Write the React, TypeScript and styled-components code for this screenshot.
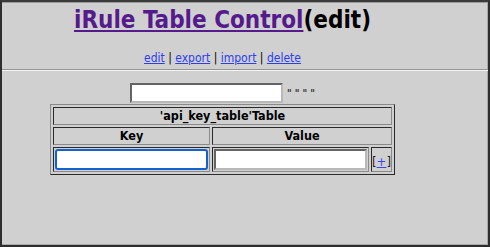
import styled, { createGlobalStyle } from "styled-components";

const GlobalStyle = createGlobalStyle`
    html, body {
        margin: 0;
        padding: 0;
    }
    body {
        font-family: "DejaVu Sans Condensed", "DejaVu Sans", sans-serif;
        background: #d0d0d0;
    }
`;

const Frame = styled.div`
    box-sizing: border-box;
    height: 247px;
    background: #d0d0d0;
    border-top: 2px solid #3a3a3a;
    border-left: 2px solid #2e2e2e;
    border-right: 2px solid #2e2e2e;
    border-bottom: 2px solid #2e2e2e;
    box-shadow: inset 0 1px 0 #9a9a9a, inset -1px 0 0 #a8a8a8, inset 0 -1px 0 #a8a8a8;
    overflow: hidden;
`;

const Header = styled.div`
    width: 441px;
    text-align: center;
    padding-top: 4px;
`;

const Title = styled.div`
    font-size: 24px;
    font-weight: bold;
    line-height: 28px;
    color: #000;
`;

const TitleLink = styled.a`
    color: #551a8b;
    text-decoration: underline;
`;

const Nav = styled.div`
    margin-top: 17px;
    font-size: 12px;
    line-height: 14px;
    color: #000;
`;

const NavLink = styled.a`
    color: #2b3ff0;
    text-decoration: underline;
`;

const Rule = styled.hr`
    margin: 4px 0 0;
    border: 0;
    height: 0;
    border-top: 1px solid #969696;
    border-bottom: 1px solid #f4f4f4;
`;

const Body = styled.div`
    width: 441px;
    display: flex;
    flex-direction: column;
    align-items: center;
    padding-top: 12px;
`;

const NameRow = styled.div`
    display: flex;
    align-items: center;
    gap: 4px;
`;

const TextInput = styled.input<{ $w: number; $h: number; $focused?: boolean }>`
    display: block;
    box-sizing: border-box;
    width: ${({ $w }) => $w}px;
    height: ${({ $h }) => $h}px;
    margin: 0;
    background: #fff;
    border: ${({ $focused }) => ($focused ? "2px solid #1462cf" : "2px inset #b8b8b8")};
    border-radius: ${({ $focused }) => ($focused ? "3px" : "0")};
    box-shadow: ${({ $focused }) => ($focused ? "inset 0 0 0 1px #fff" : "none")};
    outline: none;
    font-family: inherit;
    font-size: 12px;
`;

const Quotes = styled.span`
    font-size: 10px;
    font-weight: bold;
    color: #333;
    white-space: pre;
`;

const Table = styled.table`
    margin-top: 1px;
    border-collapse: separate;
    border-spacing: 2px;
    border-top: 1px solid #8a8a8a;
    border-left: 1px solid #8a8a8a;
    border-right: 1px solid #2a2a2a;
    border-bottom: 1px solid #2a2a2a;
`;

const Cell = styled.td<{ $head?: boolean }>`
    padding: 1px;
    border-top: 1px solid #2a2a2a;
    border-left: 1px solid #2a2a2a;
    border-right: 1px solid #8a8a8a;
    border-bottom: 1px solid #8a8a8a;
    text-align: center;
    vertical-align: middle;
    font-size: 12.5px;
    line-height: 14px;
    font-weight: ${({ $head }) => ($head ? "bold" : "normal")};
    color: #000;
`;

const AddCell = styled(Cell)`
    width: 18px;
    padding: 0;
`;

const AddButton = styled.span`
    display: inline-block;
    font-size: 13px;
    line-height: 14px;
    margin-top: 5px;
    color: #222;
`;

const Plus = styled.a`
    color: #3a46ee;
    text-decoration: underline;
`;

export default function App() {
    return (
        <>
            <GlobalStyle />
            <Frame>
                <Header>
                    <Title>
                        <TitleLink href="#">iRule Table Control</TitleLink>(edit)
                    </Title>
                    <Nav>
                        <NavLink href="#">edit</NavLink> | <NavLink href="#">export</NavLink> |{" "}
                        <NavLink href="#">import</NavLink> | <NavLink href="#">delete</NavLink>
                    </Nav>
                </Header>
                <Rule />
                <Body>
                    <NameRow>
                        <TextInput $w={153} $h={20} />
                        <Quotes>{'" " " "'}</Quotes>
                    </NameRow>
                    <Table>
                        <tbody>
                            <tr>
                                <Cell $head colSpan={3}>'api_key_table'Table</Cell>
                            </tr>
                            <tr>
                                <Cell $head>Key</Cell>
                                <Cell $head colSpan={2}>Value</Cell>
                            </tr>
                            <tr>
                                <Cell>
                                    <TextInput $w={153} $h={21} $focused />
                                </Cell>
                                <Cell>
                                    <TextInput $w={153} $h={21} />
                                </Cell>
                                <AddCell>
                                    <AddButton>
                                        [<Plus href="#">+</Plus>]
                                    </AddButton>
                                </AddCell>
                            </tr>
                        </tbody>
                    </Table>
                </Body>
            </Frame>
        </>
    );
}
